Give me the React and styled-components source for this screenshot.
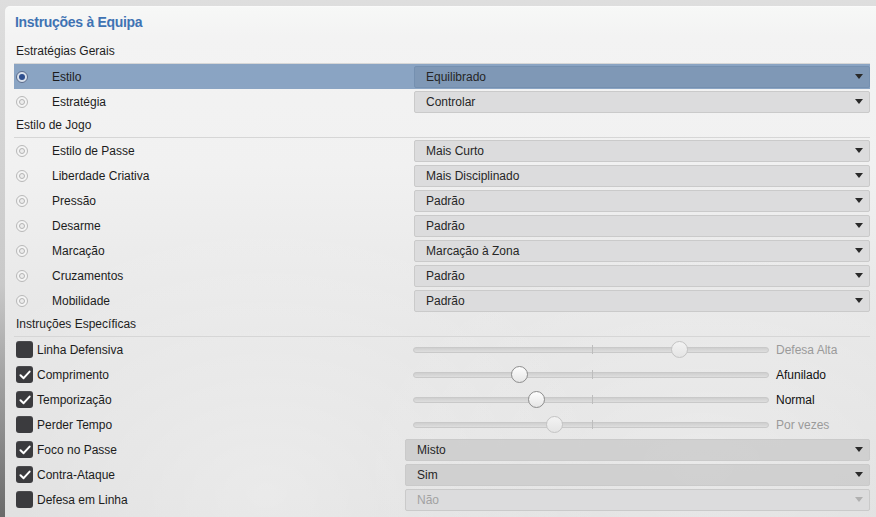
import React from 'react'
import styled, { createGlobalStyle } from 'styled-components'

const GlobalStyle = createGlobalStyle`
  html, body { margin: 0; padding: 0; }
  body {
    width: 876px;
    height: 517px;
    overflow: hidden;
    font-family: "Liberation Sans", Arial, sans-serif;
    background: linear-gradient(180deg, #dedede 0%, #c9c9c9 55%, #6a6a6a 100%);
  }
`

const Page = styled.div`
  height: 517px;
  padding: 6px 0 0 5px;
  box-sizing: border-box;
  display: flex;
`

const Panel = styled.section`
  flex: 1;
  border-top-left-radius: 5px;
  background:
    radial-gradient(ellipse at 30% 95%, rgba(255,255,255,0.35), transparent 40%),
    radial-gradient(ellipse at 80% 90%, rgba(255,255,255,0.3), transparent 35%),
    linear-gradient(180deg, #f7f8f7 0px, #f3f3f3 30px, #f1f1f1 160px, #e6e6e6 330px, #dedede 100%);
  padding: 0 6px 0 9px;
  box-shadow: inset 0 1px 0 #fafafa;
`

const Title = styled.h2`
  margin: 0;
  height: 34px;
  line-height: 32px;
  padding-left: 1px;
  font-size: 14px;
  font-weight: 700;
  color: #3f73b3;
  letter-spacing: -0.3px;
`

const SectionHeader = styled.div`
  height: 23px;
  line-height: 23px;
  padding-left: 2px;
  font-size: 12px;
  color: #1e1e1e;
  border-bottom: 1px solid #d6d6d6;
`

const Row = styled.div`
  display: grid;
  grid-template-columns: ${p => p.$cols};
  align-items: center;
  height: 25px;
  font-size: 12px;
  color: #1c1c1c;
  background: ${p => (p.$active ? '#8aa4c3' : 'transparent')};
`

const RadioCell = styled.div`
  display: flex;
  align-items: center;
  gap: 24px;
  padding-left: 2px;
`

const Radio = styled.span`
  width: 12px;
  height: 12px;
  border-radius: 50%;
  box-sizing: border-box;
  border: 1px solid ${p => (p.$on ? '#58698a' : '#b8b8b8')};
  background: ${p => (p.$on ? '#d9e1ec' : '#f4f4f4')};
  display: flex;
  align-items: center;
  justify-content: center;
  &::after {
    content: '';
    width: 6px;
    height: 6px;
    border-radius: 50%;
    box-sizing: border-box;
    ${p => (p.$on
      ? 'background: #2f4f8e;'
      : 'border: 1px solid #b3b3b3; background: #ececec;')}
  }
`

const Select = styled.div`
  height: 22px;
  box-sizing: border-box;
  border: 1px solid ${p => (p.$active ? '#7590b0' : '#cacaca')};
  border-radius: 2px;
  background: ${p => (p.$active ? '#7f98b6' : p.$dark ? 'rgba(200,200,200,0.75)' : '#dcdcdd')};
  display: flex;
  align-items: center;
  justify-content: space-between;
  padding: 0 6px 0 11px;
  font-size: 12px;
  color: ${p => (p.$disabled ? '#a2a2a2' : '#262626')};
  &::after {
    content: '';
    border-left: 4px solid transparent;
    border-right: 4px solid transparent;
    border-top: 5px solid ${p => (p.$disabled ? '#b0b0b0' : '#2a2a2a')};
  }
`

const CheckCell = styled.div`
  display: flex;
  align-items: center;
  gap: 4px;
  padding-left: 2px;
`

const Box = styled.span`
  width: 17px;
  height: 17px;
  border-radius: 3px;
  background: #3b3b3e;
  box-shadow: inset 0 1px 0 rgba(255,255,255,0.08);
  display: flex;
  align-items: center;
  justify-content: center;
`

const SliderCell = styled.div`
  display: flex;
  align-items: center;
`

const Track = styled.div`
  position: relative;
  width: 356px;
  height: 6px;
  box-sizing: border-box;
  border-radius: 3px;
  border: 1px solid #c9c9c9;
  background: linear-gradient(180deg, #cfcfcf, #dedede);
  &::before {
    content: '';
    position: absolute;
    left: 178px;
    top: -3px;
    width: 1px;
    height: 9px;
    background: #bdbdbd;
  }
`

const Thumb = styled.span`
  position: absolute;
  top: 50%;
  width: 17px;
  height: 17px;
  margin: -9px 0 0 -9px;
  border-radius: 50%;
  box-sizing: border-box;
  border: 1px solid ${p => (p.$disabled ? '#c4c4c4' : '#8d8d8d')};
  background: ${p => (p.$disabled
    ? 'linear-gradient(180deg, #f3f3f3, #e4e4e4)'
    : 'linear-gradient(180deg, #fdfdfd, #e6e6e6)')};
`

const SliderLabel = styled.span`
  margin-left: 7px;
  font-size: 12px;
  color: ${p => (p.$disabled ? '#9a9a9a' : '#111')};
`

const Check = () => (
  <svg width="12" height="10" viewBox="0 0 12 10">
    <path d="M1.5 5.2 L4.6 8.2 L10.6 1.6" fill="none" stroke="#fff" strokeWidth="2" strokeLinecap="round" strokeLinejoin="round" />
  </svg>
)

const general = [
  { label: 'Estilo', value: 'Equilibrado', active: true },
  { label: 'Estratégia', value: 'Controlar' },
]

const play = [
  ['Estilo de Passe', 'Mais Curto'],
  ['Liberdade Criativa', 'Mais Disciplinado'],
  ['Pressão', 'Padrão'],
  ['Desarme', 'Padrão'],
  ['Marcação', 'Marcação à Zona'],
  ['Cruzamentos', 'Padrão'],
  ['Mobilidade', 'Padrão'],
]

const sliders = [
  { label: 'Linha Defensiva', on: false, pos: 0.75, value: 'Defesa Alta' },
  { label: 'Comprimento', on: true, pos: 0.3, value: 'Afunilado' },
  { label: 'Temporização', on: true, pos: 0.348, value: 'Normal' },
  { label: 'Perder Tempo', on: false, pos: 0.399, value: 'Por vezes' },
]

const choices = [
  { label: 'Foco no Passe', on: true, value: 'Misto' },
  { label: 'Contra-Ataque', on: true, value: 'Sim' },
  { label: 'Defesa em Linha', on: false, value: 'Não' },
]

const RadioRow = ({ label, value, active }) => (
  <Row $cols="400px 1fr" $active={active}>
    <RadioCell>
      <Radio $on={active} />
      {label}
    </RadioCell>
    <Select $active={active}>{value}</Select>
  </Row>
)

export default function App() {
  return (
    <>
      <GlobalStyle />
      <Page>
        <Panel>
          <Title>Instruções à Equipa</Title>

          <SectionHeader>Estratégias Gerais</SectionHeader>
          {general.map(r => <RadioRow key={r.label} {...r} />)}

          <SectionHeader>Estilo de Jogo</SectionHeader>
          {play.map(([label, value]) => <RadioRow key={label} label={label} value={value} />)}

          <SectionHeader>Instruções Específicas</SectionHeader>
          {sliders.map(s => (
            <Row key={s.label} $cols="399px 1fr">
              <CheckCell>
                <Box>{s.on && <Check />}</Box>
                {s.label}
              </CheckCell>
              <SliderCell>
                <Track>
                  <Thumb $disabled={!s.on} style={{ left: `${s.pos * 100}%` }} />
                </Track>
                <SliderLabel $disabled={!s.on}>{s.value}</SliderLabel>
              </SliderCell>
            </Row>
          ))}
          {choices.map(c => (
            <Row key={c.label} $cols="391px 1fr">
              <CheckCell>
                <Box>{c.on && <Check />}</Box>
                {c.label}
              </CheckCell>
              <Select $dark={c.on} $disabled={!c.on}>{c.value}</Select>
            </Row>
          ))}
        </Panel>
      </Page>
    </>
  )
}
